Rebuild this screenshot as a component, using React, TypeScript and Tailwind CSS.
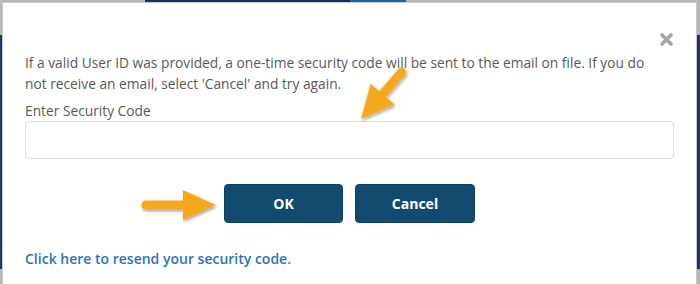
export default function App() {
  return (
    <div
      className="relative flex h-[284px] w-[700px] flex-col overflow-hidden bg-[#b8b8b8]"
      style={{ fontFamily: '"Open Sans", "Noto Sans", Arial, sans-serif' }}
    >
      {/* page behind the overlay */}
      <div className="flex h-[2px] shrink-0">
        <div className="ml-[145px] w-[205px] bg-[#1b2b5e]" />
        <div className="w-[56px] bg-[#2160a6]" />
      </div>

      <div className="flex flex-1">
        <div className="w-[2px] shrink-0 pt-[33px]">
          <div className="h-[234px] bg-[#1d3570]" />
        </div>

        <div className="flex flex-1 flex-col border border-b-0 border-[#c9c9c9] bg-white px-[22px]">
          <div className="flex h-[49px] justify-end pt-[28px]">
            <button className="flex h-[16px] w-[16px] items-center justify-center" aria-label="Close">
              <svg width="13" height="13" viewBox="0 0 13 13">
                <path d="M2 2L11 11M11 2L2 11" stroke="#a6a6a6" strokeWidth="3.6" strokeLinecap="round" />
              </svg>
            </button>
          </div>

          <p className="max-w-[640px] text-[13.75px] leading-[21px] text-[#595959]">
            If a valid User ID was provided, a one-time security code will be sent to the email on file. If you do not receive an email, select 'Cancel' and try again.
          </p>

          <label className="mt-[6px] text-[13.75px] leading-[21px] text-[#595959]">Enter Security Code</label>
          <input
            type="text"
            className="h-[38px] w-full rounded-[4px] border border-[#dcdcdc] bg-white px-3 text-[14px] outline-none"
          />

          <div className="mt-[25px] flex justify-center gap-[12px]">
            <button className="h-[39px] w-[119px] rounded-[4px] border border-[#0f3d5e] bg-[#134b70] text-[14px] font-bold text-white">
              OK
            </button>
            <button className="h-[39px] w-[120px] rounded-[4px] border border-[#0f3d5e] bg-[#134b70] text-[14px] font-bold text-white">
              Cancel
            </button>
          </div>

          <a href="#" className="mt-[25px] text-[14px] font-semibold leading-[21px] text-[#2a73c2]">
            Click here to resend your security code.
          </a>
        </div>

        <div className="w-[3px] shrink-0 pt-[33px]">
          <div className="h-[234px] bg-[#1d3570]" />
        </div>
      </div>

      {/* annotation arrows */}
      <svg className="pointer-events-none absolute left-0 top-0" width="700" height="284">
        <defs>
          <filter id="sh" x="-20%" y="-20%" width="140%" height="140%">
            <feDropShadow dx="1" dy="2" stdDeviation="1.5" floodColor="#000" floodOpacity="0.35" />
          </filter>
        </defs>
        <g filter="url(#sh)" fill="#f6a81b">
          <g transform="translate(216 205)">
            <line x1="-70" y1="0" x2="-28" y2="0" stroke="#f6a81b" strokeWidth="9" strokeLinecap="round" />
            <polygon points="0,0 -33,-15 -33,15" />
          </g>
          <g transform="translate(361 119) rotate(131)">
            <line x1="-62" y1="0" x2="-26" y2="0" stroke="#f6a81b" strokeWidth="9" strokeLinecap="round" />
            <polygon points="0,0 -33,-16 -33,16" />
          </g>
        </g>
      </svg>
    </div>
  )
}
